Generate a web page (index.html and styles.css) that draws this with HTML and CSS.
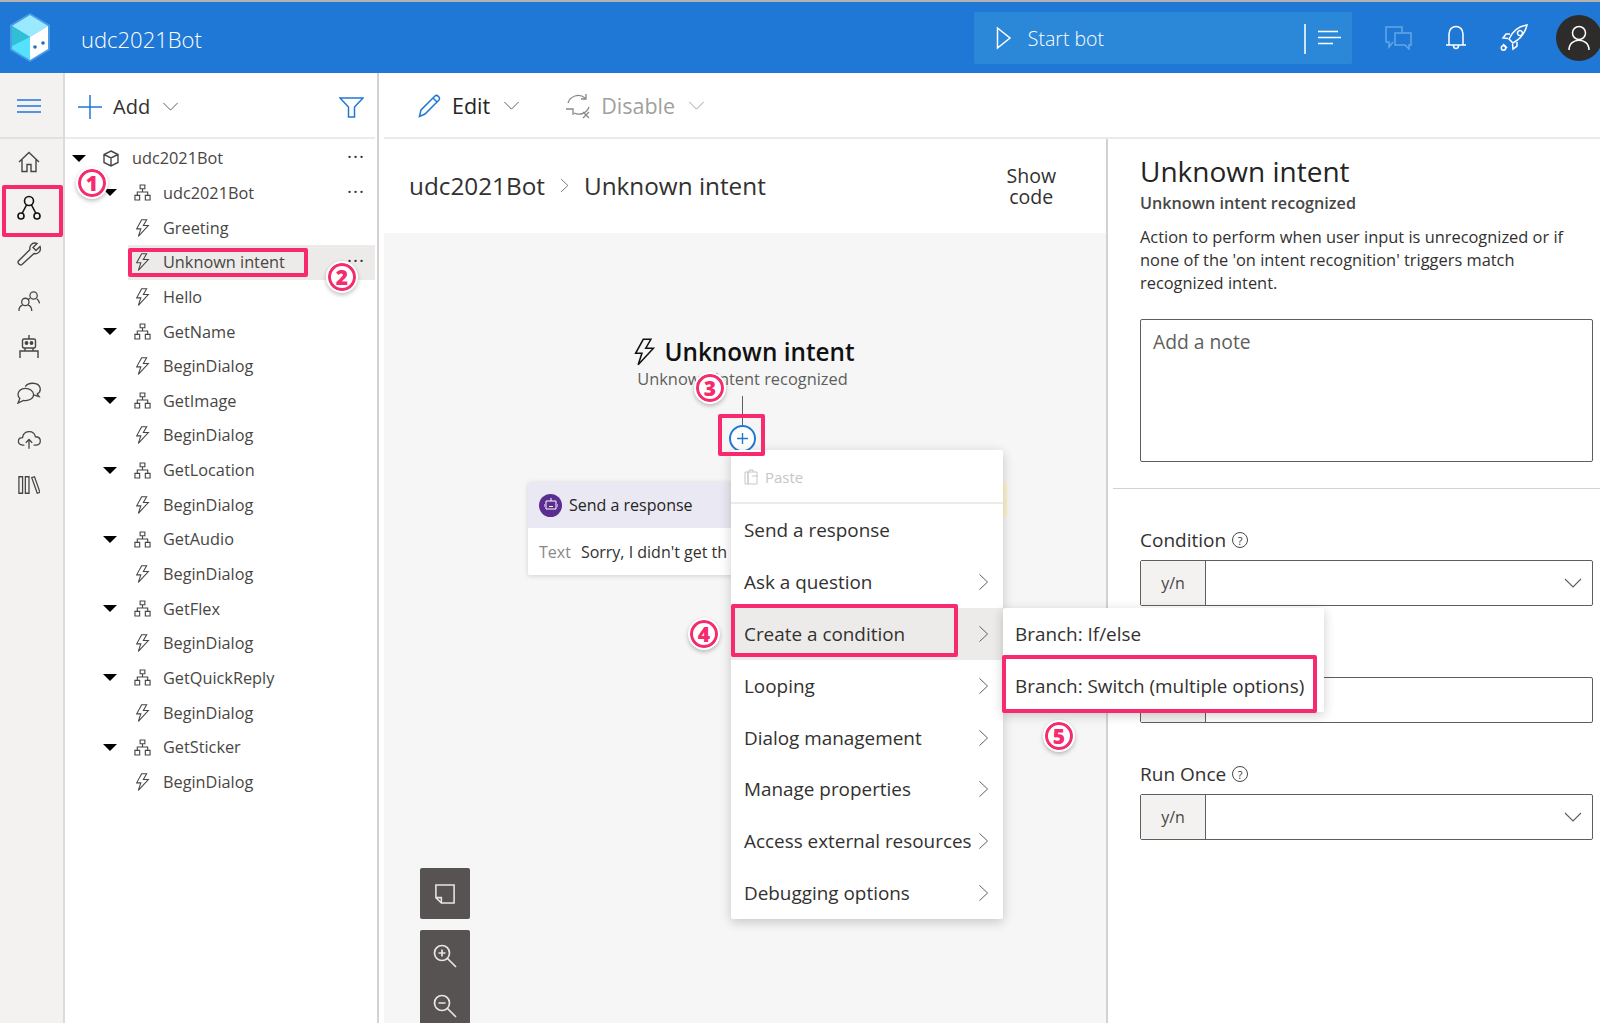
FILE: index.html
```html
<!DOCTYPE html>
<html lang="en">
<head>
    <meta charset="UTF-8">
    <title>udc2021Bot - Composer</title>
    <link rel="stylesheet" href="styles.css">
</head>
<body>
    <svg class="defs">
        <symbol id="bolt" viewBox="0 0 18 22"><path d="M8 1 2 12h5L4 21 16 8h-6l4-7z"/></symbol>
        <symbol id="dialog" viewBox="0 0 18 18"><path d="M6.500 1h5v4h-5zM1 12h5v5H1zM12 12h5v5h-5zM9 5v3.500M3.500 12V8.500h11V12"/></symbol>
        <symbol id="chev-right" viewBox="0 0 12 20"><path d="M1.500 1.500 10.500 10l-9 8.500"/></symbol>
        <symbol id="chev-down" viewBox="0 0 18 10"><path d="M1 1l8 8 8-8"/></symbol>
    </svg>

    <header class="topbar">
        <svg class="logo" viewBox="0 0 40 49">
            <path d="M20 0 40 12v25L20 49 0 37V12z" fill="#4a9be8"/>
            <path d="M20 2 38 13 20 24 2 13z" fill="#9aeaff"/>
            <path d="M2 13 20 24 2 33z" fill="#2fc0d6"/>
            <path d="M2 33 20 24v23L2 36z" fill="#55e2ff"/>
            <path d="M38 13v23L20 47V24z" fill="#fff"/>
            <circle cx="25" cy="34" r="1.800" fill="#1f6fc4"/>
            <circle cx="33" cy="30" r="1.800" fill="#1f6fc4"/>
        </svg>
        <div class="app-name">udc2021Bot</div>
        <div class="start-group">
            <div class="start-main">
                <svg class="ico-white" width="16" height="24" viewBox="0 0 16 24"><path d="M1.500 2 14 12 1.500 22z"/></svg>
                <span>Start bot</span>
            </div>
            <div class="start-menu">
                <svg class="ico-white" width="24" height="16" viewBox="0 0 24 16"><path d="M1 1.500h20M1 7.500h24M1 13.500h15"/></svg>
            </div>
        </div>
        <div class="top-icons">
            <svg class="ico-faded" width="27" height="24" viewBox="0 0 27 24"><path d="M17 7V1H1v15h3v5l4-5M10 7h16v12h-2v4l-4-4H10z"/></svg>
            <svg class="ico-white" width="22" height="25" viewBox="0 0 22 25"><path d="M1 20h20M4 20V9c0-10 14-10 14 0v11M8.500 20.500c0 4 5 4 5 0"/></svg>
            <svg class="ico-white" width="28" height="27" viewBox="0 0 28 27"><path d="M27 1C19 2 13 6 9 15l4 4c8-4 12-10 14-18zM10 10H6l-3 4 5 .5M17 18v4l-4 3-.5-5M3 20l4 4M20 6.500a2.500 2.500 0 1 0 .01 0"/><circle cx="3.500" cy="24" r="2.200"/></svg>
        </div>
        <div class="avatar">
            <svg class="ico-white" width="24" height="26" viewBox="0 0 24 26"><circle cx="12" cy="8" r="6.500"/><path d="M2 25c0-13 20-13 20 0"/></svg>
        </div>
    </header>

    <div class="workspace">
        <nav class="rail">
            <div class="rail-top">
                <svg class="ico-blue" width="24" height="14" viewBox="0 0 24 14"><path d="M0 1h24M0 7h24M0 13h24"/></svg>
            </div>
            <div class="rail-items">
                <svg class="ico-dark" width="22" height="22" viewBox="0 0 22 22"><path d="M1 11 11 1.500 21 11M4 8.500V20.500h5v-7h4v7h5V8.500"/></svg>
                <svg class="ico-black" width="24" height="26" viewBox="0 0 24 26"><circle cx="12" cy="6" r="4.500"/><circle cx="4" cy="21" r="3"/><circle cx="20" cy="21" r="3"/><path d="M9.500 10 5 18.500M14.500 10 19 18.500"/></svg>
                <svg class="ico-dark" width="24" height="24" viewBox="0 0 24 24"><path d="M1.500 19 13 7.500C12 3 16 0 20 1.500l-4 4 3 3 4-4c1.500 4-1.500 8-6 7L5 22.500c-2 1.500-5-1.500-3.500-3.500z"/></svg>
                <svg class="ico-dark" width="22" height="22" viewBox="0 0 24 24"><circle cx="8" cy="13" r="4"/><circle cx="17" cy="6" r="4"/><path d="M1 23c0-4 2-6 4-6.500M11 16.500c2 .5 4 2.500 4 6.500M20.500 9.500c1.500 1 2.500 2.500 3 5M13 9l-2 1.500"/></svg>
                <svg class="ico-dark" width="20" height="24" viewBox="0 0 20 24"><path d="M10 0v4M5 4h10a1.500 1.500 0 0 1 1.500 1.500v6A1.500 1.500 0 0 1 15 13H5a1.500 1.500 0 0 1-1.500-1.500v-6A1.500 1.500 0 0 1 5 4zM6 13v3M14 13v3M1 23v-7h18v7"/><circle cx="7.500" cy="8" r="1.200" fill="#484644"/><circle cx="12.500" cy="8" r="1.200" fill="#484644"/></svg>
                <svg class="ico-dark" width="24" height="22" viewBox="0 0 26 24"><path d="M9 5c3-5 14-5 16 1 1 4-1 6-3 7l2 3-6-2M9 7C4 7 1 10 1 14c0 2 1 3 2 4l-2 5 6-3c6 1 11-2 11-6s-4-7-9-7z"/></svg>
                <svg class="ico-dark" width="24" height="21" viewBox="0 0 26 22"><path d="M8 17H6c-6 0-6-8 0-8 1-8 12-9 14-1 7 0 7 9 0 9h-2M13 21V11M9.500 14.500 13 11l3.500 3.500"/></svg>
                <svg class="ico-dark" width="22" height="20" viewBox="0 0 24 20"><path d="M1 1h4v18H1zM8 1h4v18H8zM15 2l3-1 6 17-3 1z"/></svg>
            </div>
        </nav>

        <aside class="tree-panel">
            <div class="tree-toolbar">
                <svg class="ico-blue" width="24" height="24" viewBox="0 0 24 24"><path d="M12 0v24M0 12h24"/></svg>
                <span class="add-label">Add</span>
                <svg class="chev chev-gray" width="17" height="9"><use href="#chev-down"/></svg>
                <svg class="filter ico-blue" width="25" height="21" viewBox="0 0 25 21"><path d="M1 1h23l-8.500 9v10h-6V10z"/></svg>
            </div>
            <ul class="tree">
                <li class="row lvl0"><i class="caret"></i>
                    <svg class="ico-dark node-ico" width="16" height="17" viewBox="0 0 16 17"><path d="M8 1l7 3.500v8L8 16l-7-3.500v-8zM1 4.500 8 8l7-3.500M8 8v8"/></svg>
                    <span>udc2021Bot</span><b class="dots">···</b></li>
                <li class="row lvl1"><i class="caret"></i><svg class="dlg" width="17" height="17"><use href="#dialog"/></svg><span>udc2021Bot</span><b class="dots">···</b></li>
                <li class="row lvl2"><svg class="bolt" width="15" height="20"><use href="#bolt"/></svg><span>Greeting</span></li>
                <li class="row lvl2 selected"><svg class="bolt" width="15" height="20"><use href="#bolt"/></svg><span>Unknown intent</span><b class="dots">···</b></li>
                <li class="row lvl2"><svg class="bolt" width="15" height="20"><use href="#bolt"/></svg><span>Hello</span></li>
                <li class="row lvl1"><i class="caret"></i><svg class="dlg" width="17" height="17"><use href="#dialog"/></svg><span>GetName</span></li>
                <li class="row lvl2"><svg class="bolt" width="15" height="20"><use href="#bolt"/></svg><span>BeginDialog</span></li>
                <li class="row lvl1"><i class="caret"></i><svg class="dlg" width="17" height="17"><use href="#dialog"/></svg><span>GetImage</span></li>
                <li class="row lvl2"><svg class="bolt" width="15" height="20"><use href="#bolt"/></svg><span>BeginDialog</span></li>
                <li class="row lvl1"><i class="caret"></i><svg class="dlg" width="17" height="17"><use href="#dialog"/></svg><span>GetLocation</span></li>
                <li class="row lvl2"><svg class="bolt" width="15" height="20"><use href="#bolt"/></svg><span>BeginDialog</span></li>
                <li class="row lvl1"><i class="caret"></i><svg class="dlg" width="17" height="17"><use href="#dialog"/></svg><span>GetAudio</span></li>
                <li class="row lvl2"><svg class="bolt" width="15" height="20"><use href="#bolt"/></svg><span>BeginDialog</span></li>
                <li class="row lvl1"><i class="caret"></i><svg class="dlg" width="17" height="17"><use href="#dialog"/></svg><span>GetFlex</span></li>
                <li class="row lvl2"><svg class="bolt" width="15" height="20"><use href="#bolt"/></svg><span>BeginDialog</span></li>
                <li class="row lvl1"><i class="caret"></i><svg class="dlg" width="17" height="17"><use href="#dialog"/></svg><span>GetQuickReply</span></li>
                <li class="row lvl2"><svg class="bolt" width="15" height="20"><use href="#bolt"/></svg><span>BeginDialog</span></li>
                <li class="row lvl1"><i class="caret"></i><svg class="dlg" width="17" height="17"><use href="#dialog"/></svg><span>GetSticker</span></li>
                <li class="row lvl2"><svg class="bolt" width="15" height="20"><use href="#bolt"/></svg><span>BeginDialog</span></li>
            </ul>
        </aside>

        <main class="content">
            <div class="action-bar">
                <div class="action">
                    <svg class="ico-blue" width="25" height="25" viewBox="0 0 25 25"><path d="M1.500 23.500 3 17 17 3c2-2 6 2 4 4L7 21zM15 5l4.500 4.500"/></svg>
                    <span>Edit</span>
                    <svg class="chev chev-gray" width="17" height="9"><use href="#chev-down"/></svg>
                </div>
                <div class="action disabled">
                    <svg class="ico-gray" width="27" height="27" viewBox="0 0 27 27"><path d="M3 11C5 4 14 1 20 6M16 7h5V2M24 15c-2 6-9 9-15 6M1 17h7v6M18 20l6 6M24 20l-6 6"/></svg>
                    <span>Disable</span>
                    <svg class="chev chev-faint" width="17" height="9"><use href="#chev-down"/></svg>
                </div>
            </div>
            <div class="columns">
                <section class="designer">
                    <div class="crumbs">
                        <span>udc2021Bot</span>
                        <svg class="chev chev-gray" width="9" height="15"><use href="#chev-right"/></svg>
                        <span>Unknown intent</span>
                        <div class="show-code">Show<br>code</div>
                    </div>
                    <div class="canvas">
                        <div class="trigger-title">
                            <svg class="bolt bolt-big" width="23" height="28"><use href="#bolt"/></svg>
                            <span>Unknown intent</span>
                        </div>
                        <div class="trigger-sub">Unknown intent recognized</div>
                        <div class="edge"></div>
                        <div class="plus">
                            <svg class="ico-blue" width="11" height="11" viewBox="0 0 12 12"><path d="M6 0v12M0 6h12"/></svg>
                        </div>

                        <div class="yellow-edge"></div>
                        <div class="card">
                            <div class="card-head">
                                <span class="card-badge">
                                    <svg class="ico-white" width="14" height="14" viewBox="0 0 14 14"><path d="M7 0v3M2 3h10v8H2zM5 6h.01M9 6h.01M5 8.500h4M0 6v3M14 6v3"/></svg>
                                </span>
                                Send a response
                            </div>
                            <div class="card-body"><span class="card-key">Text</span>Sorry, I didn't get th</div>
                        </div>

                        <div class="canvas-tools">
                            <div class="tool-box">
                                <svg class="ico-light" width="20" height="20" viewBox="0 0 22 22"><path d="M1 1h20v20H7l-6-6zM1 15h6v6"/></svg>
                            </div>
                            <div class="tool-box tool-zoom">
                                <svg class="ico-light" width="24" height="24" viewBox="0 0 24 24"><circle cx="9" cy="9" r="7.500"/><path d="M14.500 14.500 23 23M5.500 9h7M9 5.500v7"/></svg>
                                <svg class="ico-light" width="24" height="24" viewBox="0 0 24 24"><circle cx="9" cy="9" r="7.500"/><path d="M14.500 14.500 23 23M5.500 9h7"/></svg>
                            </div>
                        </div>
                    </div>
                </section>

                <section class="props">
                    <div class="props-head">
                        <h2>Unknown intent</h2>
                        <h3>Unknown intent recognized</h3>
                        <p>Action to perform when user input is unrecognized or if none of the 'on intent recognition' triggers match recognized intent.</p>
                        <div class="note">Add a note</div>
                    </div>
                    <div class="props-form">
                        <label class="field-label">Condition <i class="help">?</i></label>
                        <div class="field">
                            <span class="field-type">y/n</span>
                            <svg class="chev chev-gray" width="18" height="10"><use href="#chev-down"/></svg>
                        </div>
                        <div class="field-label"></div>
                        <div class="field">
                            <span class="field-type">y/n</span>
                        </div>
                        <label class="field-label">Run Once <i class="help">?</i></label>
                        <div class="field">
                            <span class="field-type">y/n</span>
                            <svg class="chev chev-gray" width="18" height="10"><use href="#chev-down"/></svg>
                        </div>
                    </div>
                </section>
            </div>
        </main>
    </div>

    <!-- context menu over the canvas -->
    <div class="menu">
        <div class="menu-paste">
            <svg class="ico-faint" width="15" height="16" viewBox="0 0 15 16"><path d="M1 3h3v12H1zM4 3h9v12H4zM5 3V1h4v2M8 7h6"/></svg>
            <span>Paste</span>
        </div>
        <div class="menu-item">Send a response</div>
        <div class="menu-item">Ask a question<svg class="chev chev-gray" width="11" height="18"><use href="#chev-right"/></svg></div>
        <div class="menu-item active">Create a condition<svg class="chev chev-gray" width="11" height="18"><use href="#chev-right"/></svg></div>
        <div class="menu-item">Looping<svg class="chev chev-gray" width="11" height="18"><use href="#chev-right"/></svg></div>
        <div class="menu-item">Dialog management<svg class="chev chev-gray" width="11" height="18"><use href="#chev-right"/></svg></div>
        <div class="menu-item">Manage properties<svg class="chev chev-gray" width="11" height="18"><use href="#chev-right"/></svg></div>
        <div class="menu-item">Access external resources<svg class="chev chev-gray" width="11" height="18"><use href="#chev-right"/></svg></div>
        <div class="menu-item">Debugging options<svg class="chev chev-gray" width="11" height="18"><use href="#chev-right"/></svg></div>
    </div>
    <div class="submenu">
        <div class="menu-item">Branch: If/else</div>
        <div class="menu-item">Branch: Switch (multiple options)</div>
    </div>

    <!-- screenshot annotations -->
    <div class="mark mark-rail"></div>
    <div class="mark mark-tree"></div>
    <div class="mark mark-plus"></div>
    <div class="mark mark-cond"></div>
    <div class="mark mark-switch"></div>
    <div class="step step-1">1</div>
    <div class="step step-2">2</div>
    <div class="step step-3">3</div>
    <div class="step step-4">4</div>
    <div class="step step-5">5</div>
</body>
</html>
```

FILE: styles.css
```css
* {
    margin: 0;
    padding: 0;
    box-sizing: border-box;
}

body {
    width: 1600px;
    height: 1023px;
    overflow: hidden;
    position: relative;
    background: #fff;
    color: #323130;
    font-family: 'Open Sans', 'Noto Sans', sans-serif;
    font-size: 16px;
    display: flex;
    flex-direction: column;
}

.defs {
    position: absolute;
    width: 0;
    height: 0;
}

svg {
    fill: none;
    flex-shrink: 0;
}

.ico-white { stroke: #fff; stroke-width: 1.5; }
.ico-faded { stroke: #62a6e6; stroke-width: 1.5; }
.ico-blue { stroke: #1f78d6; stroke-width: 1.5; }
.ico-dark { stroke: #484644; stroke-width: 1.4; }
.ico-black { stroke: #111; stroke-width: 1.6; }
.ico-gray { stroke: #8a8886; stroke-width: 1.3; }
.ico-light { stroke: #e8e6e4; stroke-width: 1.7; }
.ico-faint { stroke: #c8c6c4; stroke-width: 1; }
.chev-gray { stroke: #605e5c; stroke-width: 1.1; }
.chev-faint { stroke: #a19f9d; stroke-width: 1.1; }

/* top bar */
.topbar {
    height: 73px;
    flex-shrink: 0;
    background: #1f78d6;
    border-top: 2px solid #b4b2b0;
    display: flex;
    align-items: center;
    color: #fff;
}

.logo {
    width: 40px;
    height: 49px;
    margin-left: 10px;
}

.app-name {
    margin-left: 31px;
    padding-top: 2px;
    font-size: 22px;
    font-weight: 300;
}

.start-group {
    margin-left: 772px;
    height: 52px;
    display: flex;
    background: #2b88d8;
    border-radius: 2px;
}

.start-main {
    width: 330px;
    display: flex;
    align-items: center;
    gap: 16px;
    padding-left: 22px;
    font-size: 19.500px;
    font-weight: 300;
    position: relative;
}

.start-main span {
    padding-top: 2px;
}

.start-main::after {
    content: "";
    position: absolute;
    right: -2px;
    top: 12px;
    height: 30px;
    border-right: 2px solid #cfe4f7;
}

.start-menu {
    width: 48px;
    display: flex;
    align-items: center;
    padding-left: 13px;
}

.top-icons {
    margin-left: 33px;
    display: flex;
    align-items: center;
    gap: 33px;
}

.avatar {
    width: 46px;
    height: 46px;
    margin-left: 28px;
    border-radius: 50%;
    background: #2e2c2b;
    display: flex;
    align-items: center;
    justify-content: center;
    flex-shrink: 0;
}

/* main area */
.workspace {
    flex: 1;
    min-height: 0;
    display: flex;
}

.rail {
    width: 65px;
    flex-shrink: 0;
    background: #f3f2f1;
    border-right: 2px solid #dddbd9;
}

.rail-top {
    height: 66px;
    padding-top: 2px;
    border-bottom: 2px solid #e3e1df;
    display: flex;
    align-items: center;
    padding-left: 17px;
}

.rail-items {
    display: grid;
    grid-auto-rows: 46.200px;
    justify-items: center;
    align-items: center;
    padding-right: 5px;
}

.tree-panel {
    width: 314px;
    flex-shrink: 0;
    border-right: 2px solid #d4d2d0;
}

.tree-toolbar {
    height: 66px;
    padding-top: 3px;
    border-bottom: 2px solid #edebe9;
    display: flex;
    align-items: center;
    padding-left: 13px;
    margin-right: 2px;
    position: relative;
}

.add-label {
    margin-left: 11px;
    margin-right: 12px;
    font-size: 20px;
}

.filter {
    position: absolute;
    right: 11px;
    top: 24px;
}

.tree {
    list-style: none;
    padding-top: 2px;
}

.row {
    height: 34.650px;
    display: flex;
    align-items: center;
    position: relative;
    margin-right: 2px;
    font-size: 16.300px;
    color: #484644;
}

.caret {
    width: 0;
    height: 0;
    border-left: 7px solid transparent;
    border-right: 7px solid transparent;
    border-top: 7px solid #000;
    flex-shrink: 0;
}

.lvl0 { padding-left: 7px; }
.lvl1 { padding-left: 38px; }
.lvl2 { padding-left: 70px; }

.node-ico { margin-left: 17px; margin-right: 13px; }

.dlg {
    stroke: #484644;
    stroke-width: 1.2;
    margin-left: 17px;
    margin-right: 12px;
}

.bolt {
    stroke: #484644;
    stroke-width: 1.3;
    margin-right: 13px;
}

.selected {
    background: #edebe9;
    margin-left: 63px;
    padding-left: 7px;
}

.dots {
    position: absolute;
    right: 10px;
    top: 2px;
    font-size: 19px;
    font-weight: 400;
    line-height: 26px;
    letter-spacing: 1px;
    color: #323130;
}

.content {
    flex: 1;
    min-width: 0;
    display: flex;
    flex-direction: column;
}

.action-bar {
    height: 66px;
    margin-left: 5px;
    flex-shrink: 0;
    border-bottom: 2px solid #edebe9;
    display: flex;
    align-items: center;
    padding-left: 34px;
    gap: 45px;
}

.action {
    display: flex;
    align-items: center;
    font-size: 21.500px;
    color: #252423;
}

.action span {
    margin-left: 9px;
    margin-right: 13px;
}

.disabled {
    color: #a19f9d;
}

.columns {
    flex: 1;
    min-height: 0;
    display: flex;
}

.designer {
    width: 729px;
    flex-shrink: 0;
    border-right: 2px solid #d4d2d0;
    display: flex;
    flex-direction: column;
}

.crumbs {
    height: 94px;
    flex-shrink: 0;
    display: flex;
    align-items: center;
    padding-left: 30px;
    padding-bottom: 2px;
    font-size: 24.300px;
    gap: 15px;
}

.show-code {
    margin-left: auto;
    margin-right: 50px;
    padding-top: 2px;
    font-size: 19.500px;
    line-height: 21px;
    text-align: center;
}

.canvas {
    flex: 1;
    margin-left: 5px;
    background: #f6f6f6;
    position: relative;
    display: flex;
    flex-direction: column;
    align-items: center;
    padding-top: 102px;
    padding-right: 5px;
}

.trigger-title {
    display: flex;
    align-items: center;
    gap: 8px;
    padding-left: 3px;
    font-size: 24.300px;
    font-weight: 600;
    color: #111;
    line-height: 34px;
}

.bolt-big {
    stroke: #111;
    stroke-width: 1.2;
    margin: 0;
}

.trigger-sub {
    margin-top: -1px;
    font-size: 16.400px;
    color: #605e5c;
    line-height: 22px;
}

.edge {
    width: 1px;
    height: 30px;
    margin-top: 6px;
    background: #605e5c;
}

.plus {
    width: 27px;
    height: 27px;
    border-radius: 50%;
    margin-top: -1px;
    border: 2.500px solid #1f78d6;
    background: #fff;
    display: flex;
    align-items: center;
    justify-content: center;
}

.card {
    position: absolute;
    left: 144px;
    top: 249px;
    width: 220px;
    height: 93px;
    background: #fff;
    box-shadow: 0 1px 5px rgba(0, 0, 0, 0.15);
    border-radius: 2px;
    overflow: hidden;
    font-size: 16px;
    white-space: nowrap;
}

.card-head {
    height: 46px;
    background: #eae8f2;
    display: flex;
    align-items: center;
    gap: 7px;
    padding-left: 11px;
    color: #252423;
}

.card-badge {
    width: 23px;
    height: 23px;
    border-radius: 50%;
    background: #5c2d91;
    display: flex;
    align-items: center;
    justify-content: center;
}

.card-badge svg {
    stroke-width: 1;
}

.card-body {
    height: 47px;
    display: flex;
    align-items: center;
    padding-left: 11px;
}

.card-key {
    color: #8a8886;
    margin-right: 10px;
}

.yellow-edge {
    position: absolute;
    left: 600px;
    top: 249px;
    width: 23px;
    height: 35px;
    background: #fff4ce;
    border-radius: 2px;
}

.canvas-tools {
    position: absolute;
    left: 36px;
    top: 635px;
    display: flex;
    flex-direction: column;
    gap: 11px;
}

.tool-box {
    width: 50px;
    height: 51px;
    background: #565352;
    border-radius: 2px;
    display: flex;
    align-items: center;
    justify-content: center;
}

.tool-zoom {
    height: 110px;
    flex-direction: column;
    justify-content: flex-start;
    padding-top: 14px;
    gap: 26px;
}

/* properties */
.props {
    flex: 1;
    min-width: 0;
}

.props-head {
    padding: 13px 7px 0 27px;
    height: 350px;
    border-bottom: 1px solid #d4d2d0;
    margin-left: 5px;
}

.props-head h2 {
    font-size: 28px;
    font-weight: 500;
    line-height: 38px;
    color: #252423;
}

.props-head h3 {
    font-size: 16.200px;
    font-weight: 600;
    line-height: 22px;
    margin-top: 2px;
    color: #484644;
}

.props-head p {
    font-size: 16.400px;
    line-height: 23.200px;
    margin-top: 11px;
    color: #323130;
}

.note {
    height: 143px;
    margin-top: 24px;
    border: 1px solid #605e5c;
    border-radius: 2px;
    padding: 8px 12px;
    font-size: 19.300px;
    color: #605e5c;
}

.props-form {
    padding: 39px 7px 0 32px;
}

.field-label {
    display: flex;
    align-items: center;
    gap: 6px;
    height: 24px;
    font-size: 19px;
    color: #323130;
}

.field {
    height: 46px;
    margin-top: 8px;
    border: 1px solid #605e5c;
    border-radius: 2px;
    display: flex;
    align-items: center;
    justify-content: space-between;
    padding-right: 10px;
    margin-bottom: 39px;
}

.field-type {
    width: 65px;
    height: 100%;
    background: #f3f2f1;
    border-right: 1px solid #605e5c;
    display: flex;
    align-items: center;
    justify-content: center;
    font-size: 16px;
    color: #484644;
}

.help {
    width: 16px;
    height: 16px;
    border: 1px solid #484644;
    border-radius: 50%;
    font-size: 11px;
    font-style: normal;
    display: flex;
    align-items: center;
    justify-content: center;
}

/* context menu */
.menu,
.submenu {
    position: absolute;
    background: #fff;
    box-shadow: 0 3px 12px rgba(0, 0, 0, 0.2);
    border-radius: 2px;
}

.menu {
    left: 731px;
    top: 450px;
    width: 272px;
}

.menu-paste {
    height: 54px;
    display: flex;
    align-items: center;
    gap: 6px;
    padding-left: 13px;
    padding-top: 2px;
    font-size: 15px;
    color: #c8c6c4;
    border-bottom: 2px solid #edebe9;
}

.menu-item {
    height: 51.900px;
    display: flex;
    align-items: center;
    justify-content: space-between;
    padding: 0 14px 0 13px;
    font-size: 18.900px;
    color: #323130;
    white-space: nowrap;
}

.active {
    background: #edebe9;
}

.submenu {
    left: 1003px;
    top: 608px;
    width: 321px;
}

.submenu .menu-item {
    padding-left: 12px;
}

/* annotations */
.mark {
    position: absolute;
    border: 4px solid #f62a6c;
    border-radius: 2px;
}

.mark-rail { left: 2px; top: 185px; width: 61px; height: 52px; }
.mark-tree { left: 128px; top: 248px; width: 180px; height: 29px; }
.mark-plus { left: 718px; top: 414px; width: 47px; height: 42px; }
.mark-cond { left: 731px; top: 604px; width: 227px; height: 53px; }
.mark-switch { left: 1002px; top: 655px; width: 315px; height: 58px; }

.step {
    position: absolute;
    width: 28px;
    height: 28px;
    border-radius: 50%;
    border: 3px solid #f62a6c;
    outline: 2px solid #fff;
    background: #fff;
    box-shadow: 0 2px 4px 2px rgba(0, 0, 0, 0.25);
    color: #f62a6c;
    font-size: 21px;
    font-weight: 800;
    line-height: 22px;
    text-align: center;
}

.step-1 { left: 78px; top: 169px; }
.step-2 { left: 328px; top: 263px; }
.step-3 { left: 696px; top: 374px; }
.step-4 { left: 690px; top: 620px; }
.step-5 { left: 1045px; top: 722px; }
```
